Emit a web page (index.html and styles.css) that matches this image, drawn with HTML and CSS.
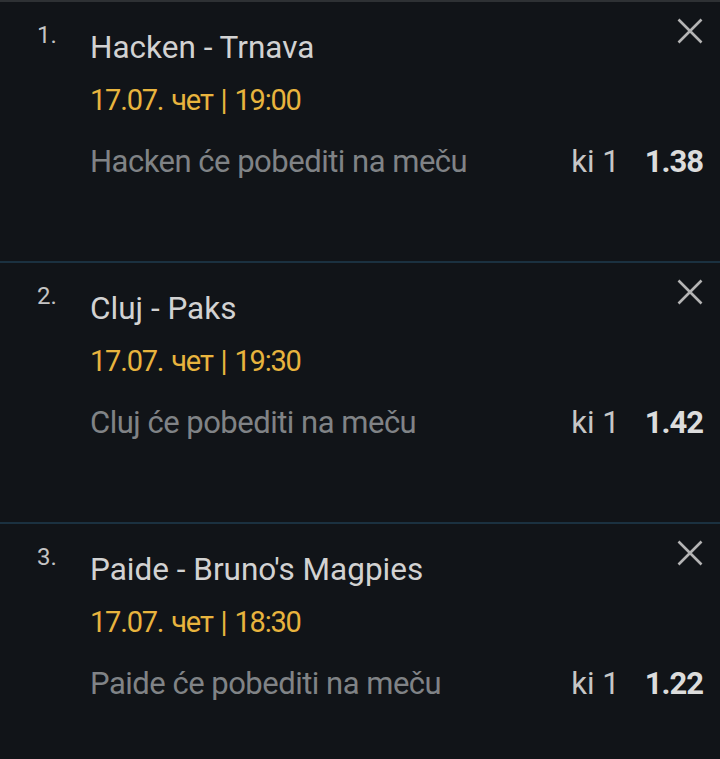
FILE: index.html
```html
<!DOCTYPE html>
<html lang="sr">
<head>
  <meta charset="UTF-8" />
  <meta name="viewport" content="width=device-width, initial-scale=1.0"/>
  <title>Tiket</title>
  <link rel="stylesheet" href="styles.css">
</head>
<body>
  <div class="tiket">

    <div class="par">
      <div class="broj">1.</div>
      <div class="sadrzaj">
        <div class="zaglavlje">
          <div class="naziv">Hacken - Trnava</div>
          <button class="ukloni" aria-label="Ukloni">
            <svg viewBox="0 0 26 26" width="26" height="26"><path d="M1.5 1.5 L24.5 24.5 M24.5 1.5 L1.5 24.5" /></svg>
          </button>
        </div>
        <div class="vreme">17.07. чет | 19:00</div>
        <div class="tip">
          <span class="opis">Hacken će pobediti na meču</span>
          <span class="kvota"><span class="oznaka">ki 1</span><b>1.38</b></span>
        </div>
      </div>
    </div>

    <div class="par">
      <div class="broj">2.</div>
      <div class="sadrzaj">
        <div class="zaglavlje">
          <div class="naziv">Cluj - Paks</div>
          <button class="ukloni" aria-label="Ukloni">
            <svg viewBox="0 0 26 26" width="26" height="26"><path d="M1.5 1.5 L24.5 24.5 M24.5 1.5 L1.5 24.5" /></svg>
          </button>
        </div>
        <div class="vreme">17.07. чет | 19:30</div>
        <div class="tip">
          <span class="opis">Cluj će pobediti na meču</span>
          <span class="kvota"><span class="oznaka">ki 1</span><b>1.42</b></span>
        </div>
      </div>
    </div>

    <div class="par">
      <div class="broj">3.</div>
      <div class="sadrzaj">
        <div class="zaglavlje">
          <div class="naziv">Paide - Bruno's Magpies</div>
          <button class="ukloni" aria-label="Ukloni">
            <svg viewBox="0 0 26 26" width="26" height="26"><path d="M1.5 1.5 L24.5 24.5 M24.5 1.5 L1.5 24.5" /></svg>
          </button>
        </div>
        <div class="vreme">17.07. чет | 18:30</div>
        <div class="tip">
          <span class="opis">Paide će pobediti na meču</span>
          <span class="kvota"><span class="oznaka">ki 1</span><b>1.22</b></span>
        </div>
      </div>
    </div>

  </div>
</body>
</html>
```

FILE: styles.css
```css
body {
  margin: 0;
  background: #111418;
  font-family: Roboto, 'Noto Sans', sans-serif;
  color: #d4d4d4;
}

.tiket {
  border-top: 2px solid #2e3134;
}

.par {
  display: grid;
  grid-template-columns: 53px 1fr;
  height: 261px;
  padding: 16px 17px 0 37px;
  box-sizing: border-box;
  border-bottom: 2px solid #1b3140;
}

.broj {
  font-size: 24px;
  line-height: 28px;
  margin-top: 3px;
  color: #c4c4c4;
}

.zaglavlje {
  display: flex;
  justify-content: space-between;
  align-items: flex-start;
}

.naziv {
  font-size: 31.5px;
  line-height: 36px;
  margin-top: 12px;
  color: #d2d2d2;
}

.ukloni {
  background: none;
  border: none;
  padding: 0;
  margin: 0;
  width: 26px;
  height: 26px;
  cursor: pointer;
}

.ukloni svg {
  display: block;
  stroke: #b4b4b4;
  stroke-width: 2.6;
  fill: none;
}

.vreme {
  font-size: 29px;
  line-height: 36px;
  margin-top: 16px;
  letter-spacing: -1.2px;
  word-spacing: 2px;
  color: #e8b43e;
}

.tip {
  display: flex;
  justify-content: space-between;
  align-items: baseline;
  margin-top: 26px;
  font-size: 31px;
  line-height: 36px;
}

.opis {
  color: #808386;
  letter-spacing: -0.5px;
}

.kvota {
  display: flex;
  gap: 25px;
  align-items: baseline;
}

.oznaka {
  color: #c6c6c6;
}

.kvota b {
  color: #dcdcdc;
  font-weight: 700;
  letter-spacing: -1px;
}
```
